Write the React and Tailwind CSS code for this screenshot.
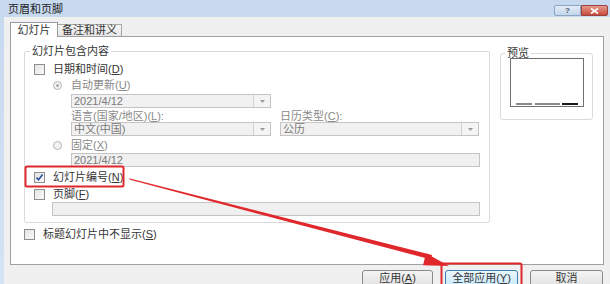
import React from "react";

const font = { fontFamily: '"Liberation Sans", "Noto Sans CJK SC", sans-serif' };

function Check({ checked }) {
  return (
    <span className="inline-flex h-[11px] w-[11px] shrink-0 items-center justify-center border border-[#8f8f8f] bg-gradient-to-br from-[#e4e4e4] to-[#fafafa]">
      {checked && (
        <svg width="9" height="9" viewBox="0 0 9 9">
          <path d="M1.5 4.5 L3.5 6.8 L7.6 1.6" fill="none" stroke="#2a4f9a" strokeWidth="1.6" />
        </svg>
      )}
    </span>
  );
}

function Radio({ on }) {
  return (
    <span className="inline-flex h-[9px] w-[9px] shrink-0 items-center justify-center rounded-full border border-[#b5b5b5] bg-[#f2f2f2]">
      {on && <span className="h-[3px] w-[3px] rounded-full bg-[#a8a8a8]" />}
    </span>
  );
}

function U({ children }) {
  return <span className="underline underline-offset-[1px]">{children}</span>;
}

function Drop({ text }) {
  return (
    <div className="flex h-[14px] items-center border border-[#c4c4c4] bg-[#f1f1f1] text-[#7a7a7a]">
      <span className="flex-1 pl-[2px] leading-none">{text}</span>
      <span className="flex h-full w-[17px] items-center justify-center border-l border-[#d2d2d2] bg-[#f4f4f4]">
        <svg width="5" height="3" viewBox="0 0 5 3">
          <path d="M0 0 L5 0 L2.5 3 Z" fill="#9a9a9a" />
        </svg>
      </span>
    </div>
  );
}

function Field({ text }) {
  return (
    <div className="flex h-[14px] items-center border border-[#c4c4c4] bg-[#f0f0f0] pl-[2px] leading-none text-[#7a7a7a]">
      {text}
    </div>
  );
}

export default function App() {
  return (
    <div
      className="relative flex h-[284px] w-[610px] flex-col overflow-hidden bg-gradient-to-b from-[#c7d9ef] to-[#d4e3f5] text-[11px] text-[#363636]"
      style={font}
    >
      {/* title bar */}
      <div className="flex h-[17px] shrink-0 items-start pl-[8px]">
        <span className="mt-[3px] leading-[12px] text-[#1e1e1e]">页眉和页脚</span>
        <div className="ml-auto mr-[2px] mt-[5px] flex">
          <div className="flex h-[11px] w-[27px] items-center justify-center rounded-l-[2px] border border-[#8ea5c4] bg-gradient-to-b from-[#e3ecf7] to-[#c4d5ea] text-[8px] font-bold leading-none text-[#4a5a70]">
            ?
          </div>
          <div className="flex h-[11px] w-[27px] items-center justify-center rounded-r-[2px] border border-[#9c4040] bg-gradient-to-b from-[#e49a8e] to-[#c6493b]">
            <svg width="9" height="6" viewBox="0 0 9 6">
              <path d="M1 0.5 L8 5.5 M8 0.5 L1 5.5" stroke="#fff" strokeWidth="1.6" />
            </svg>
          </div>
        </div>
      </div>

      {/* body */}
      <div className="ml-[4px] flex flex-1 flex-col bg-[#f0f0f0] pl-[6px] pr-[6px]">
        {/* tabs */}
        <div className="mt-[4px] flex h-[15px] items-end">
          <div className="relative z-10 -mb-px flex h-[15px] w-[48px] items-center justify-center border border-b-0 border-[#9a9a9a] bg-white leading-none">
            幻灯片
          </div>
          <div className="flex h-[12px] w-[64px] items-center justify-center border border-b-0 border-l-0 border-[#a7a7a7] bg-gradient-to-b from-[#f6f6f6] to-[#e4e4e4] leading-none">
            备注和讲义
          </div>
        </div>

        {/* panel */}
        <div className="flex h-[229px] flex-col border border-[#a0a0a0] bg-white pl-[13px] pr-[10px]">
          <div className="flex items-start">
            <fieldset className="mt-[8px] h-[178px] w-[466px] rounded-[2px] border border-[#dadada] pb-[7px]">
              <legend className="ml-[5px] px-[2px] leading-[12px]">幻灯片包含内容</legend>
              <div className="flex flex-col">
                <div className="mt-[5px] flex h-[14px] items-center gap-[8px] pl-[9px]">
                  <Check />
                  <span className="leading-none">
                    日期和时间(<U>D</U>)
                  </span>
                </div>
                <div className="mt-[2px] flex h-[14px] items-center gap-[9px] pl-[28px] text-[#8a8a8a]">
                  <Radio on />
                  <span className="leading-none">
                    自动更新(<U>U</U>)
                  </span>
                </div>
                <div className="mt-[2px] pl-[46px] pr-[218px]">
                  <Drop text="2021/4/12" />
                </div>
                <div className="mt-[2px] grid grid-cols-[200px_199px] gap-x-[9px] pl-[46px] text-[#8a8a8a]">
                  <span className="h-[12px] leading-[12px]">
                    语言(国家/地区)(<U>L</U>):
                  </span>
                  <span className="h-[12px] leading-[12px]">
                    日历类型(<U>C</U>):
                  </span>
                  <Drop text="中文(中国)" />
                  <Drop text="公历" />
                </div>
                <div className="mt-[2px] flex h-[14px] items-center gap-[9px] pl-[28px] text-[#8a8a8a]">
                  <Radio />
                  <span className="leading-none">
                    固定(<U>X</U>)
                  </span>
                </div>
                <div className="mt-[1px] pl-[46px] pr-[9px]">
                  <Field text="2021/4/12" />
                </div>
                <div className="mt-[3px] flex h-[14px] items-center gap-[8px] pl-[9px]">
                  <Check checked />
                  <span className="leading-none">
                    幻灯片编号(<U>N</U>)
                  </span>
                </div>
                <div className="mt-[3px] flex h-[14px] items-center gap-[8px] pl-[9px]">
                  <Check />
                  <span className="leading-none">
                    页脚(<U>F</U>)
                  </span>
                </div>
                <div className="mt-[1px] pl-[27px] pr-[9px]">
                  <Field text="" />
                </div>
              </div>
            </fieldset>

            <fieldset className="ml-[10px] mt-[10px] h-[73px] w-[93px] rounded-[3px] border border-[#dadada]">
              <legend className="ml-[4px] px-[2px] leading-[12px]">预览</legend>
              <div className="ml-[9px] mt-[-1px] flex h-[49px] w-[74px] items-end justify-between border border-[#707070] bg-white px-[5px] pb-[1px]">
                <span className="h-[2px] w-[16px] bg-[#8a8a8a]" />
                <span className="h-[2px] w-[25px] bg-[#8a8a8a]" />
                <span className="h-[2px] w-[16px] bg-[#1a1a1a]" />
              </div>
            </fieldset>
          </div>

          <div className="mt-[4px] flex h-[14px] items-center gap-[8px]">
            <Check />
            <span className="leading-none">
              标题幻灯片中不显示(<U>S</U>)
            </span>
          </div>
        </div>

        {/* buttons */}
        <div className="mt-[5px] flex gap-[12px] pl-[352px]">
          <div className="flex h-[22px] w-[71px] items-start justify-center rounded-[3px] border border-[#8a8a8a] bg-gradient-to-b from-[#f4f4f4] to-[#dcdcdc] pt-[2px] leading-none">
            应用(<U>A</U>)
          </div>
          <div className="flex h-[22px] w-[73px] items-start justify-center rounded-[3px] border border-[#3c7fb1] bg-gradient-to-b from-[#eaf6fd] to-[#bee6fd] pt-[2px] leading-none">
            全部应用(<U>Y</U>)
          </div>
          <div className="flex h-[22px] w-[73px] items-start justify-center rounded-[3px] border border-[#8a8a8a] bg-gradient-to-b from-[#f4f4f4] to-[#dcdcdc] pt-[2px] leading-none">
            取消
          </div>
        </div>
      </div>

      {/* annotations */}
      <svg className="pointer-events-none absolute left-0 top-0" width="610" height="284" viewBox="0 0 610 284">
        <rect x="25.5" y="166.5" width="98" height="20" rx="1.5" fill="none" stroke="#e0282c" strokeWidth="2" />
        <rect x="441.5" y="263.5" width="80" height="24" rx="1.5" fill="none" stroke="#e0282c" strokeWidth="2" />
        <polygon points="129,178.3 130,179.8 431,259.5 432,255" fill="#e0282c" />
        <polygon points="449,266 426,253.2 423,265.2" fill="#e0282c" />
      </svg>
    </div>
  );
}
